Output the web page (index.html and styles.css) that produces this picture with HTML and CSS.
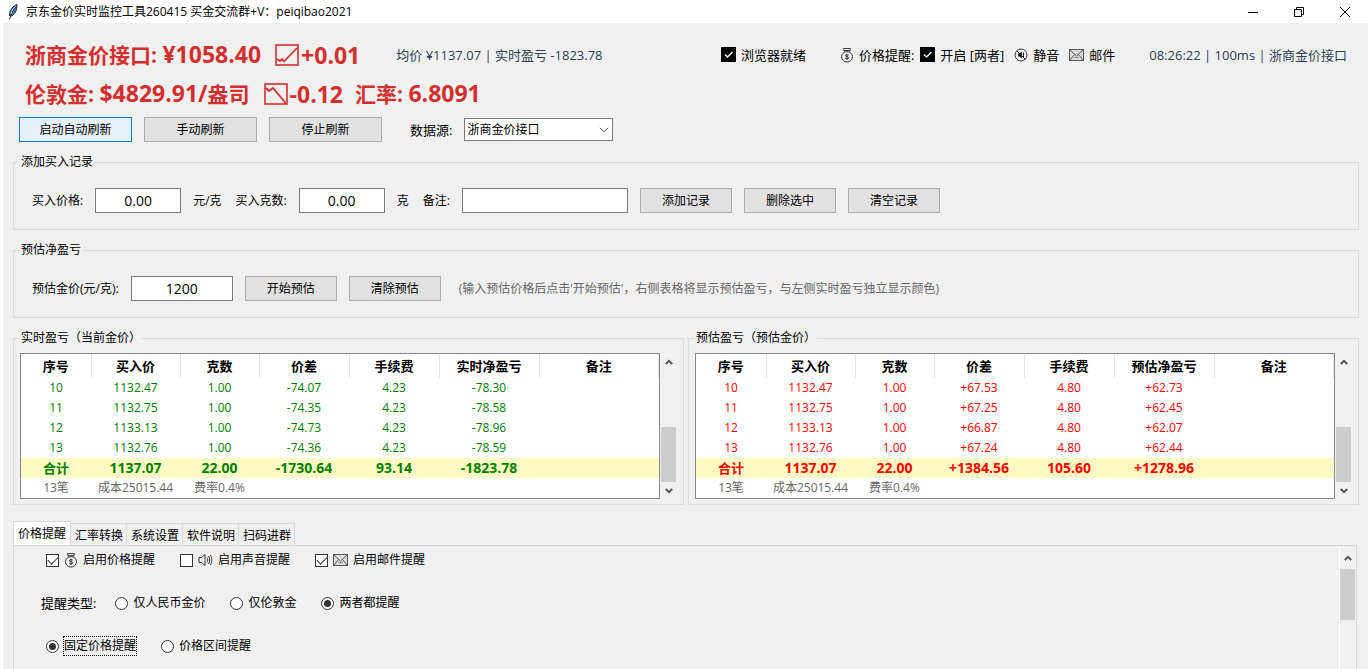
FILE: index.html
```html
<!DOCTYPE html>
<html lang="zh-CN">
<head>
  <meta charset="UTF-8" />
  <meta name="viewport" content="width=device-width, initial-scale=1.0"/>
  <title>京东金价实时监控工具260415</title>
  <link rel="stylesheet" href="styles.css">
</head>
<body>
  <!-- shared icons -->
  <svg class="icon-defs" width="0" height="0" aria-hidden="true">
    <symbol id="i-check" viewBox="0 0 15 15">
      <rect width="15" height="15" fill="#000"/>
      <path d="M4 7.5l2.5 2.5L11.5 5" fill="none" stroke="#fff" stroke-width="1.4"/>
    </symbol>
    <symbol id="i-money" viewBox="0 0 14 16">
      <g fill="none" stroke="#333">
        <path d="M3.500 1.500h7M3.500 3.500h7M3.500 1.500l1 3M10.500 1.500l-1 3" stroke="#444"/>
        <ellipse cx="7" cy="9.800" rx="5.500" ry="5.200"/>
        <path d="M8.800 8.200c-.6-.8-3.400-.9-3.400.4 0 1.300 3.400.7 3.400 2.200 0 1.200-2.900 1.200-3.600.3M7 6.800v6.200"/>
      </g>
    </symbol>
    <symbol id="i-mute" viewBox="0 0 14 14">
      <circle cx="7" cy="7" r="6" fill="none" stroke="#333"/>
      <path d="M4 5.500h1.500l2.500-2v7l-2.500-2H4z" fill="#222"/>
      <path d="M2.800 2.800l8.500 8.500M9.500 4.500v5" fill="none" stroke="#222"/>
    </symbol>
    <symbol id="i-mail" viewBox="0 0 15 12">
      <g fill="none" stroke="#555">
        <rect x=".5" y=".5" width="14" height="11" fill="#ddd"/>
        <path d="M1 1l6.500 6L14 1M1 11l4.500-5.500M14 11L9.500 5.500"/>
        <path d="M5 8.500h5" stroke="#888"/>
      </g>
    </symbol>
    <symbol id="i-sound" viewBox="0 0 15 14">
      <g fill="none" stroke="#333">
        <path d="M1 4.500h2.500L7 1.500v11L3.500 9.500H1z" fill="#eee"/>
        <path d="M9 4.500c1 1.500 1 3.500 0 5M10.500 3c1.700 2.400 1.700 5.600 0 8M12.200 2c2.200 3 2.200 7 0 10"/>
      </g>
    </symbol>
    <symbol id="i-up" viewBox="0 0 24 22">
      <rect x="1" y="1" width="22" height="20" fill="none" stroke="currentColor" stroke-width="1.600"/>
      <path d="M2 15l3 2 2-2 2 2.500L22 4" fill="none" stroke="currentColor" stroke-width="1.800"/>
    </symbol>
    <symbol id="i-down" viewBox="0 0 24 22">
      <rect x="1" y="1" width="22" height="20" fill="none" stroke="currentColor" stroke-width="1.600"/>
      <path d="M2 5l3 3 4-3 13 15.500" fill="none" stroke="currentColor" stroke-width="1.800"/>
    </symbol>
    <symbol id="i-arrow-up" viewBox="0 0 8 6">
      <path d="M.8 5L4 1.800 7.200 5" fill="none" stroke="#555" stroke-width="2"/>
    </symbol>
    <symbol id="i-arrow-down" viewBox="0 0 8 6">
      <path d="M.8 1L4 4.200 7.200 1" fill="none" stroke="#555" stroke-width="2"/>
    </symbol>
  </svg>

  <header class="titlebar">
    <svg class="feather" viewBox="0 0 10 16" aria-hidden="true">
      <path d="M9 .5C5.500 1.500 1.500 5.500 1.500 11.500l1 .8C6.500 11 9.300 6.500 9 .5z" fill="#4a7fc0" stroke="#111" stroke-width=".9"/>
      <path d="M7.500 3C5 6 3 10 1.500 15.500" fill="none" stroke="#111" stroke-width=".9"/>
      <path d="M7.500 2.500C5.500 4 3.500 7 3 10" fill="none" stroke="#cfe2f7" stroke-width=".9"/>
    </svg>
    <h1>京东金价实时监控工具260415 买金交流群+V：peiqibao2021</h1>
    <div class="window-controls">
      <button type="button" aria-label="最小化"><svg width="10" height="10"><path d="M0 5.500h10" stroke="#000"/></svg></button>
      <button type="button" aria-label="还原"><svg width="10" height="10"><path d="M.5 2.500h7v7h-7zM2.500 2.500v-2h7v7h-2" fill="none" stroke="#000"/></svg></button>
      <button type="button" aria-label="关闭"><svg width="10" height="10"><path d="M0 0l10 10M10 0L0 10" stroke="#000"/></svg></button>
    </div>
  </header>

  <main class="app">
    <section class="quotes">
      <div class="quote-row">
        <p class="price">浙商金价接口: <b>¥1058.40</b></p>
        <p class="price change"><svg class="trend"><use href="#i-up"/></svg><b>+0.01</b></p>
        <p class="summary">均价 ¥1137.07 | 实时盈亏 -1823.78</p>
        <div class="status">
          <span class="status-item browser"><svg class="icon-check"><use href="#i-check"/></svg>浏览器就绪</span>
          <span class="status-item"><svg class="icon-money"><use href="#i-money"/></svg>价格提醒:</span>
          <span class="status-item"><svg class="icon-check"><use href="#i-check"/></svg>开启 [两者]</span>
          <span class="status-item mute"><svg class="icon-mute"><use href="#i-mute"/></svg>静音</span>
          <span class="status-item mail"><svg class="icon-mail"><use href="#i-mail"/></svg>邮件</span>
          <span class="clock">08:26:22 | 100ms | 浙商金价接口</span>
        </div>
      </div>
      <div class="quote-row">
        <p class="price">伦敦金: <b>$4829.91/</b>盎司</p>
        <p class="price change"><svg class="trend"><use href="#i-down"/></svg><b>-0.12</b></p>
        <p class="price rate">汇率: <b>6.8091</b></p>
      </div>
    </section>

    <div class="toolbar">
      <button type="button" class="btn btn-wide focused">启动自动刷新</button>
      <button type="button" class="btn btn-wide">手动刷新</button>
      <button type="button" class="btn btn-wide">停止刷新</button>
      <label class="source-label" for="source">数据源:</label>
      <div class="select">
        <select id="source">
          <option>浙商金价接口</option>
        </select>
        <svg class="chevron" viewBox="0 0 10 6"><path d="M1 .8l4 4 4-4" fill="none" stroke="#444"/></svg>
      </div>
    </div>

    <fieldset class="group">
      <legend>添加买入记录</legend>
      <form class="form-row">
        <label for="buyPrice">买入价格:</label>
        <input type="text" id="buyPrice" class="field" value="0.00">
        <span>元/克</span>
        <label for="buyGram">买入克数:</label>
        <input type="text" id="buyGram" class="field" value="0.00">
        <span>克</span>
        <label for="note">备注:</label>
        <input type="text" id="note" class="field field-note">
        <button type="button" class="btn">添加记录</button>
        <button type="button" class="btn">删除选中</button>
        <button type="button" class="btn">清空记录</button>
      </form>
    </fieldset>

    <fieldset class="group">
      <legend>预估净盈亏</legend>
      <form class="form-row">
        <label for="estimate">预估金价(元/克):</label>
        <input type="text" id="estimate" class="field field-estimate" value="1200">
        <button type="button" class="btn">开始预估</button>
        <button type="button" class="btn">清除预估</button>
        <span class="hint">(输入预估价格后点击'开始预估'，右侧表格将显示预估盈亏，与左侧实时盈亏独立显示颜色)</span>
      </form>
    </fieldset>

    <div class="tables">
      <fieldset class="group group-table">
        <legend>实时盈亏（当前金价）</legend>
        <div class="table-wrap">
          <div class="table-box">
            <table class="down">
              <colgroup>
                <col class="c-no"><col class="c-price"><col class="c-gram"><col class="c-diff"><col class="c-fee"><col class="c-profit"><col>
              </colgroup>
              <thead>
                <tr><th>序号</th><th>买入价</th><th>克数</th><th>价差</th><th>手续费</th><th>实时净盈亏</th><th>备注</th></tr>
              </thead>
              <tbody>
                <tr><td>10</td><td>1132.47</td><td>1.00</td><td>-74.07</td><td>4.23</td><td>-78.30</td><td></td></tr>
                <tr><td>11</td><td>1132.75</td><td>1.00</td><td>-74.35</td><td>4.23</td><td>-78.58</td><td></td></tr>
                <tr><td>12</td><td>1133.13</td><td>1.00</td><td>-74.73</td><td>4.23</td><td>-78.96</td><td></td></tr>
                <tr><td>13</td><td>1132.76</td><td>1.00</td><td>-74.36</td><td>4.23</td><td>-78.59</td><td></td></tr>
                <tr class="total"><td>合计</td><td>1137.07</td><td>22.00</td><td>-1730.64</td><td>93.14</td><td>-1823.78</td><td></td></tr>
                <tr class="info"><td>13笔</td><td>成本25015.44</td><td>费率0.4%</td><td></td><td></td><td></td><td></td></tr>
              </tbody>
            </table>
          </div>
          <div class="scrollbar">
            <button type="button" aria-label="向上滚动"><svg class="arrow"><use href="#i-arrow-up"/></svg></button>
            <div class="track track-end"><div class="thumb"></div></div>
            <button type="button" aria-label="向下滚动"><svg class="arrow"><use href="#i-arrow-down"/></svg></button>
          </div>
        </div>
      </fieldset>

      <fieldset class="group group-table">
        <legend>预估盈亏（预估金价）</legend>
        <div class="table-wrap">
          <div class="table-box">
            <table class="up">
              <colgroup>
                <col class="c-no"><col class="c-price"><col class="c-gram"><col class="c-diff"><col class="c-fee"><col class="c-profit"><col>
              </colgroup>
              <thead>
                <tr><th>序号</th><th>买入价</th><th>克数</th><th>价差</th><th>手续费</th><th>预估净盈亏</th><th>备注</th></tr>
              </thead>
              <tbody>
                <tr><td>10</td><td>1132.47</td><td>1.00</td><td>+67.53</td><td>4.80</td><td>+62.73</td><td></td></tr>
                <tr><td>11</td><td>1132.75</td><td>1.00</td><td>+67.25</td><td>4.80</td><td>+62.45</td><td></td></tr>
                <tr><td>12</td><td>1133.13</td><td>1.00</td><td>+66.87</td><td>4.80</td><td>+62.07</td><td></td></tr>
                <tr><td>13</td><td>1132.76</td><td>1.00</td><td>+67.24</td><td>4.80</td><td>+62.44</td><td></td></tr>
                <tr class="total"><td>合计</td><td>1137.07</td><td>22.00</td><td>+1384.56</td><td>105.60</td><td>+1278.96</td><td></td></tr>
                <tr class="info"><td>13笔</td><td>成本25015.44</td><td>费率0.4%</td><td></td><td></td><td></td><td></td></tr>
              </tbody>
            </table>
          </div>
          <div class="scrollbar">
            <button type="button" aria-label="向上滚动"><svg class="arrow"><use href="#i-arrow-up"/></svg></button>
            <div class="track track-end"><div class="thumb"></div></div>
            <button type="button" aria-label="向下滚动"><svg class="arrow"><use href="#i-arrow-down"/></svg></button>
          </div>
        </div>
      </fieldset>
    </div>

    <section class="notebook">
      <div class="tabs" role="tablist">
        <button type="button" role="tab" class="tab active" aria-selected="true">价格提醒</button>
        <button type="button" role="tab" class="tab">汇率转换</button>
        <button type="button" role="tab" class="tab">系统设置</button>
        <button type="button" role="tab" class="tab">软件说明</button>
        <button type="button" role="tab" class="tab">扫码进群</button>
      </div>
      <div class="pane">
        <form class="options">
          <div class="option-row">
            <label class="option"><input type="checkbox" checked><svg class="icon-money"><use href="#i-money"/></svg>启用价格提醒</label>
            <label class="option"><input type="checkbox"><svg class="icon-sound"><use href="#i-sound"/></svg>启用声音提醒</label>
            <label class="option"><input type="checkbox" checked><svg class="icon-mail"><use href="#i-mail"/></svg>启用邮件提醒</label>
          </div>
          <div class="option-row">
            <span class="option-title">提醒类型:</span>
            <label class="option"><input type="radio" name="kind">仅人民币金价</label>
            <label class="option"><input type="radio" name="kind">仅伦敦金</label>
            <label class="option"><input type="radio" name="kind" checked>两者都提醒</label>
          </div>
          <div class="option-row">
            <label class="option"><input type="radio" name="mode" checked><span class="focus-text">固定价格提醒</span></label>
            <label class="option"><input type="radio" name="mode">价格区间提醒</label>
          </div>
        </form>
        <div class="scrollbar pane-scroll">
          <button type="button" aria-label="向上滚动"><svg class="arrow"><use href="#i-arrow-up"/></svg></button>
          <div class="track"><div class="thumb"></div></div>
        </div>
      </div>
    </section>
  </main>
</body>
</html>
```

FILE: styles.css
```css
* {
  box-sizing: border-box;
}

body {
  margin: 0;
  height: 100vh;
  display: flex;
  flex-direction: column;
  overflow: hidden;
  background-color: #fff;
  color: #000;
  font-family: "Open Sans", "Noto Sans CJK SC", sans-serif;
  font-size: 12px;
  line-height: 18px;
}

button, input, select {
  font: inherit;
  color: inherit;
  margin: 0;
  padding: 0;
}

p, h1 {
  margin: 0;
}

svg {
  display: block;
  flex: none;
}

.icon-defs {
  position: absolute;
}

/* title bar */
.titlebar {
  display: flex;
  align-items: center;
  height: 23px;
  flex: none;
  padding-left: 8px;
}

.titlebar h1 {
  font-size: 12px;
  font-weight: normal;
}

.feather {
  width: 10px;
  height: 16px;
  margin-right: 8px;
}

.window-controls {
  display: flex;
  margin-left: auto;
}

.window-controls button {
  width: 46px;
  height: 20px;
  display: flex;
  align-items: center;
  justify-content: center;
  border: none;
  background: none;
}

.app {
  flex: 1;
  display: flex;
  flex-direction: column;
  min-height: 0;
  margin-left: 3px;
  padding: 12px 9px 0 10px;
  background-color: #f0f0f0;
}

/* quotes */
.quote-row {
  display: flex;
  align-items: center;
  height: 39px;
  padding: 0 12px;
  white-space: nowrap;
}

.price {
  font-size: 21px;
  line-height: 30px;
  font-weight: bold;
  color: #d32f2f;
}

.price b {
  font-size: 23px;
  font-weight: bold;
}

.change {
  display: flex;
  align-items: center;
  gap: 2px;
  margin-left: 14px;
}

.trend {
  width: 24px;
  height: 22px;
}

.rate {
  margin-left: 12px;
}

.summary {
  margin-left: 36px;
  font-size: 13px;
  color: #2c3e50;
}

.status {
  display: flex;
  align-items: center;
  gap: 6px;
  margin-left: auto;
  font-size: 13px;
}

.status-item {
  display: flex;
  align-items: center;
  gap: 5px;
}

.browser {
  margin-right: 28px;
}

.mute, .mail {
  margin-left: 4px;
}

.clock {
  margin-left: 28px;
  color: #2c3e50;
}

.icon-check {
  width: 15px;
  height: 15px;
}

.icon-money {
  width: 14px;
  height: 16px;
}

.icon-mute {
  width: 14px;
  height: 14px;
}

.icon-mail {
  width: 15px;
  height: 12px;
}

.icon-sound {
  width: 15px;
  height: 14px;
}

/* toolbar */
.toolbar {
  display: flex;
  align-items: center;
  gap: 12px;
  margin-top: 4px;
  padding-left: 6px;
}

.btn {
  width: 92px;
  height: 25px;
  border: 1px solid #adadad;
  background-color: #e1e1e1;
}

.btn-wide {
  width: 113px;
}

.btn.focused {
  border-color: #0078d7;
  background-color: #e5f1fb;
}

.source-label {
  margin-left: 16px;
  font-size: 13px;
}

.select {
  position: relative;
}

.select select {
  display: block;
  width: 149px;
  height: 23px;
  padding-left: 2px;
  appearance: none;
  border: 1px solid #7a7a7a;
  border-radius: 0;
  background-color: #fff;
}

.chevron {
  position: absolute;
  right: 4px;
  top: 9px;
  width: 10px;
  height: 6px;
  pointer-events: none;
}

/* group boxes */
.group {
  min-width: 0;
  margin: 11px 0 0;
  padding: 17px 6px 16px;
  border: 1px solid #dcdcdc;
}

.group legend {
  height: 18px;
  padding: 0 1px;
}

.form-row {
  display: flex;
  align-items: center;
  gap: 12px;
  padding-left: 12px;
  white-space: nowrap;
}

.form-row span + label {
  margin-left: 2px;
}

.field {
  width: 86px;
  height: 25px;
  border: 1px solid #7a7a7a;
  background-color: #fff;
  font-size: 14px;
  text-align: center;
}

.field-note {
  width: 166px;
  text-align: left;
}

.field-estimate {
  width: 102px;
}

.hint {
  margin-left: 6px;
  color: #666;
}

/* tables */
.tables {
  display: grid;
  grid-template-columns: 1fr 1fr;
  gap: 4px;
}

.group-table {
  padding: 6px 7px 5px 6px;
}

.table-wrap {
  display: flex;
  gap: 1px;
}

.table-box {
  flex: 1;
  border: 1px solid #828790;
  background-color: #fff;
}

table {
  width: 100%;
  table-layout: fixed;
  border-collapse: collapse;
  text-align: center;
}

.c-no { width: 70px; }
.c-price { width: 89px; }
.c-gram { width: 79px; }
.c-diff { width: 90px; }
.c-fee { width: 90px; }
.c-profit { width: 100px; }

th, td {
  height: 20px;
  padding: 0;
  white-space: nowrap;
}

th {
  height: 24px;
  border-right: 1px solid #e5e5e5;
  font-size: 13px;
}

.down {
  color: #008000;
}

.up {
  color: #f00;
}

thead {
  color: #000;
}

.total {
  background-color: #fff9c4;
  font-size: 14px;
  font-weight: bold;
}

.total td:first-child {
  font-size: 13px;
}

.info {
  color: #666;
}

/* scrollbars */
.scrollbar {
  display: flex;
  flex-direction: column;
  width: 15px;
}

.scrollbar button {
  display: flex;
  align-items: center;
  justify-content: center;
  height: 17px;
  border: none;
  background: none;
}

.arrow {
  width: 8px;
  height: 6px;
}

.track {
  flex: 1;
  display: flex;
  flex-direction: column;
}

.track-end {
  justify-content: flex-end;
}

.thumb {
  height: 55px;
  background-color: #cdcdcd;
}

/* notebook */
.notebook {
  flex: 1;
  display: flex;
  flex-direction: column;
  min-height: 0;
  margin: 16px 2px 0 0;
}

.tabs {
  display: flex;
  align-items: flex-end;
}

.tab {
  height: 22px;
  padding: 2px 3px 0 4px;
  border: 1px solid #d9d9d9;
  border-width: 1px 1px 0 0;
  background-color: #f0f0f0;
}

.tab.active {
  height: 24px;
  padding: 0 4px;
  border-left-width: 1px;
  background-color: #fff;
}

.pane {
  flex: 1;
  display: flex;
  min-height: 0;
  border: 1px solid #d9d9d9;
  border-bottom: none;
}

.options {
  flex: 1;
  display: flex;
  flex-direction: column;
  gap: 25px;
  padding: 5px 0 0 32px;
}

.option-row {
  display: flex;
  align-items: center;
  gap: 25px;
}

.option {
  display: flex;
  align-items: center;
  gap: 5px;
}

.option-title {
  margin: 0 -6px 0 -5px;
  font-size: 13px;
}

.option input {
  display: grid;
  place-items: center;
  width: 13px;
  height: 13px;
  appearance: none;
  border: 1px solid #333;
  background-color: #fff;
}

.option input[type="radio"] {
  border-radius: 50%;
}

.option input[type="radio"]:checked::before {
  content: "";
  width: 7px;
  height: 7px;
  border-radius: 50%;
  background-color: #333;
}

.option input[type="checkbox"]:checked::before {
  content: "";
  width: 9px;
  height: 5px;
  margin-bottom: 3px;
  border: solid #333;
  border-width: 0 0 1px 1px;
  transform: rotate(-45deg);
}

.focus-text {
  outline: 1px dotted #000;
}

.pane-scroll {
  width: 16px;
  border-left: 1px solid #fff;
  margin-right: 1px;
}

.pane-scroll button {
  height: 23px;
}

.pane-scroll .thumb {
  height: 51px;
}
```
